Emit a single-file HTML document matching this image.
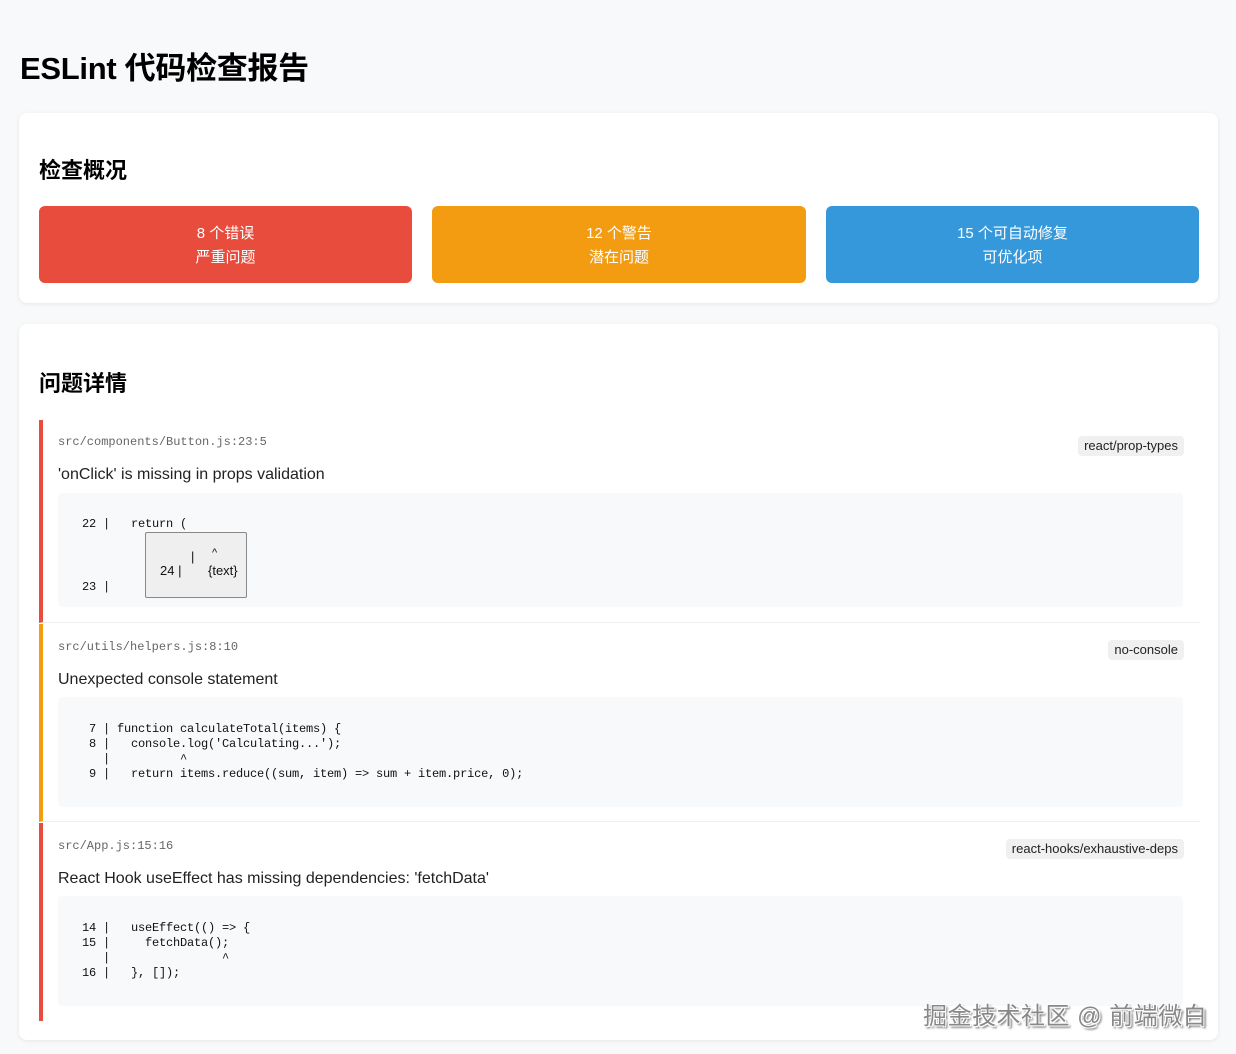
<!DOCTYPE html>
<html><head><meta charset="utf-8"><style>
*{margin:0;padding:0;box-sizing:border-box}
body{width:1236px;height:1054px;background:#f8f9fa;position:relative;overflow:hidden;font-family:"Liberation Sans","Noto Sans CJK SC",sans-serif;color:#222}
.a{position:absolute;white-space:pre}
.card{position:absolute;background:#fff;border-radius:8px;box-shadow:0 1px 4px rgba(0,0,0,.08)}
h1{position:absolute;left:20px;top:49px;font-size:31px;font-weight:bold;color:#000;line-height:40px;letter-spacing:-0.3px}
h2{position:absolute;font-size:22px;font-weight:bold;color:#000;line-height:28px}
.box{position:absolute;top:206px;height:77px;border-radius:6px;color:#fff;font-size:15px;text-align:center;line-height:24px;padding-top:16px}
.issue{position:absolute;left:39px;width:1161px;border-left:4px solid}
.path{font-family:"Liberation Mono","Noto Sans CJK SC",monospace;font-size:12px;color:#666}
.msg{font-size:16px;color:#222}
.rule{position:absolute;right:16px;background:#f0f0f0;border-radius:4px;font-size:13px;padding:2px 6px;line-height:16px;color:#222}
.code{position:absolute;left:15px;width:1125px;background:#f8f9fa;border-radius:4px}
.mono{font-family:"Liberation Mono",monospace;font-size:12px;color:#111;line-height:15px;letter-spacing:-0.2px}
</style></head><body>
<h1>ESLint 代码检查报告</h1>
<div class="card" style="left:19px;top:113px;width:1199px;height:190px"></div>
<h2 style="left:39px;top:157px">检查概况</h2>
<div class="box" style="left:39px;width:373px;background:#e74c3c">8 个错误<br>严重问题</div>
<div class="box" style="left:432px;width:374px;background:#f39c12">12 个警告<br>潜在问题</div>
<div class="box" style="left:826px;width:373px;background:#3498db">15 个可自动修复<br>可优化项</div>

<div class="card" style="left:19px;top:324px;width:1199px;height:716px"></div>
<h2 style="left:39px;top:370px">问题详情</h2>

<div class="issue" style="top:420px;height:203px;border-color:#e74c3c;border-bottom:1px solid #eee">
  <div class="a path" style="left:15px;top:15px">src/components/Button.js:23:5</div>
  <div class="rule" style="top:16px">react/prop-types</div>
  <div class="a msg" style="left:15px;top:46px">'onClick' is missing in props validation</div>
  <div class="code" style="top:73px;height:114px">
    <div class="a mono" style="left:24px;top:24px">22 |   return (</div>
    <div class="a" style="left:87px;top:39px;width:102px;height:66px;background:#efefef;border:1px solid #888;border-radius:2px;font-size:13px;color:#111">
      <div class="a" style="left:45px;top:16px">|</div><div class="a" style="left:66px;top:14px;font-size:11px">^</div>
      <div class="a" style="left:14px;top:30px">24 |</div><div class="a" style="left:62px;top:30px">{text}</div>
    </div>
    <div class="a mono" style="left:24px;top:87px">23 |</div>
  </div>
</div>

<div class="issue" style="top:624px;height:198px;border-color:#f39c12;border-bottom:1px solid #eee">
  <div class="a path" style="left:15px;top:16px">src/utils/helpers.js:8:10</div>
  <div class="rule" style="top:16px">no-console</div>
  <div class="a msg" style="left:15px;top:47px">Unexpected console statement</div>
  <div class="code" style="top:73px;height:110px">
    <div class="a mono" style="left:24px;top:25px"> 7 | function calculateTotal(items) {
 8 |   console.log('Calculating...');
   |          ^
 9 |   return items.reduce((sum, item) =&gt; sum + item.price, 0);</div>
  </div>
</div>

<div class="issue" style="top:823px;height:198px;border-color:#e74c3c">
  <div class="a path" style="left:15px;top:16px">src/App.js:15:16</div>
  <div class="rule" style="top:16px">react-hooks/exhaustive-deps</div>
  <div class="a msg" style="left:15px;top:47px">React Hook useEffect has missing dependencies: 'fetchData'</div>
  <div class="code" style="top:73px;height:110px">
    <div class="a mono" style="left:24px;top:25px">14 |   useEffect(() =&gt; {
15 |     fetchData();
   |                ^
16 |   }, []);</div>
  </div>
</div>

<div class="a" style="left:923px;top:996px;font-size:24px;color:#888;letter-spacing:0.5px;text-shadow:1px 1px 0 #fff,-1px -1px 0 #fff,1px -1px 0 #fff,-1px 1px 0 #fff,2px 2px 2px #555">掘金技术社区 @ 前端微白</div>
</body></html>
